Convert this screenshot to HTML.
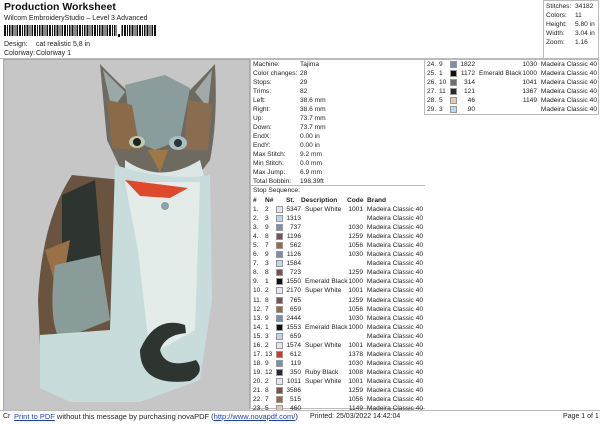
<!DOCTYPE html>
<html><head><style>
*{margin:0;padding:0;box-sizing:border-box}
body{width:600px;height:424px;background:#fff;font-family:"Liberation Sans",sans-serif;font-size:6.6px;color:#222;position:relative;overflow:hidden}
.a{position:absolute;white-space:nowrap}
.box{position:absolute;border:1px solid #bbb}
.r{position:absolute;height:9px;line-height:9px;white-space:nowrap}
.sw{position:absolute;width:7px;height:7px;top:1px;border:1px solid #999}
</style></head><body>
<div class="a" style="left:4px;top:1px;font-size:10.5px;font-weight:bold;color:#111">Production Worksheet</div>
<div class="a" style="left:4px;top:15px;font-size:7px">Wilcom EmbroideryStudio – Level 3 Advanced</div>
<div class="a" style="left:4px;top:25px;height:11px;width:153px;background:repeating-linear-gradient(90deg,#111 0 2px,#fff 2px 3px,#111 3px 4px,#fff 4px 5px,#111 5px 6.5px,#fff 6.5px 7.5px)"></div>
<div class="a" style="left:117px;top:25px;height:12px;width:4px;background:#fff"></div>
<div class="a" style="left:118px;top:34px;width:1.5px;height:3px;background:#111"></div>
<div class="a" style="left:4px;top:41px;font-size:7px">Design:</div><div class="a" style="left:36px;top:41px;font-size:7px">cat realistic 5,8 in</div>
<div class="a" style="left:4px;top:50px;font-size:7px">Colorway:</div><div class="a" style="left:36px;top:50px;font-size:7px">Colorway 1</div>
<div class="a" style="left:0;top:58px;width:598px;height:1px;background:#bbb"></div>
<div class="box" style="left:543px;top:0;width:56px;height:59px"></div>
<div class="a" style="left:546px;top:2px;line-height:9px">Stitches:<br>Colors:<br>Height:<br>Width:<br>Zoom:</div>
<div class="a" style="left:575px;top:2px;line-height:9px">34182<br>11<br>5.80 in<br>3.04 in<br>1.16</div>

<div class="a" style="left:3px;top:59px;width:247px;height:352px;background:#c6c6c6;border:1px solid #aaa">
<svg width="245" height="350" viewBox="4 60 245 350">
<path d="M100 64 Q115 80 132 95 L190 90 Q205 75 215 64 Q218 120 210 160 L195 180 L125 178 L107 140 Z" fill="#6e6a60"/>
<path d="M103 70 L125 92 L112 110Z" fill="#9aa8a8"/>
<path d="M212 70 L195 92 L208 108Z" fill="#a0a8a8"/>
<path d="M125 85 L165 75 L190 88 L180 140 L155 150 L132 140Z" fill="#8a9c9c"/>
<path d="M107 100 L132 105 L140 150 L112 148Z" fill="#8a6a48"/>
<path d="M188 100 L212 104 L208 150 L184 150Z" fill="#8a6c50"/>
<ellipse cx="137" cy="142" rx="8" ry="6" fill="#c0c8b0"/><circle cx="137" cy="142" r="4" fill="#1e2420"/>
<ellipse cx="178" cy="143" rx="9" ry="7" fill="#a8c0c4"/><circle cx="178" cy="143" r="4" fill="#2a3434"/>
<path d="M148 150 L168 150 L160 172Z" fill="#a07848"/>
<path d="M125 160 Q160 185 200 160 L205 180 L125 180Z" fill="#dce6e6"/>
<path d="M72 175 Q42 220 38 300 L40 345 L115 345 L122 180Z" fill="#6a5440"/>
<path d="M62 195 L95 180 L105 300 L62 300Z" fill="#2e3430"/>
<path d="M45 250 L70 240 L60 300Z" fill="#9a7048"/>
<path d="M55 265 Q48 320 60 340 L110 320 L100 255Z" fill="#8a9c9a"/>
<path d="M115 165 Q170 182 210 175 L212 300 L200 380 L140 402 L70 402 L40 388 L40 335 L110 330Z" fill="#c8dcdc"/>
<path d="M125 182 L200 182 L195 330 L150 355 L138 250Z" fill="#e4ecea"/>
<path d="M125 180 L188 188 L170 198 L140 196Z" fill="#e0482c"/>
<circle cx="165" cy="206" r="4" fill="#8aa0aa"/>
<path d="M185 325 Q155 315 140 350 Q140 387 190 381 Q206 372 196 360 Q165 370 160 350 Q165 335 186 333Z" fill="#2e3430"/>
</svg></div>

<div class="box" style="left:250px;top:59px;width:175px;height:350px;border-right:none"></div>
<div class="box" style="left:424px;top:59px;width:175px;height:56px"></div>
<div class="a" style="left:250px;top:185px;width:175px;height:1px;background:#bbb"></div>
<div class="a" style="left:253px;top:60px;line-height:9px">Machine:<br>Color changes:<br>Stops:<br>Trims:<br>Left:<br>Right:<br>Up:<br>Down:<br>EndX:<br>EndY:<br>Max Stitch:<br>Min Stitch:<br>Max Jump:<br>Total Bobbin:</div>
<div class="a" style="left:300px;top:60px;line-height:9px">Tajima<br>28<br>29<br>82<br>38.6 mm<br>38.6 mm<br>73.7 mm<br>73.7 mm<br>0.00 in<br>0.00 in<br>9.2 mm<br>0.0 mm<br>6.9 mm<br>198.39ft</div>
<div class="a" style="left:253px;top:187px">Stop Sequence:</div>
<div class="r" style="left:253px;top:196px;font-weight:bold;text-decoration:underline"><span class="a" style="left:0">#</span><span class="a" style="left:12px">N#</span><span class="a" style="left:33px">St.</span><span class="a" style="left:48px">Description</span><span class="a" style="left:94px">Code</span><span class="a" style="left:114px">Brand</span></div>
<div id="rows"></div>
<div class="a" style="left:0;top:410px;width:600px;height:14px;background:#fff;border-top:1px solid #bbb"></div>
<div class="a" style="left:3px;top:413px;font-size:7px">Cr</div>
<div class="a" style="left:14px;top:412px;font-size:7.5px"><span style="color:#1a3fd0;text-decoration:underline">Print to PDF</span> without this message by purchasing novaPDF (<span style="color:#1a3fd0;text-decoration:underline">http://www.novapdf.com/</span>)</div>
<div class="a" style="left:310px;top:413px;font-size:7px">Printed: 25/03/2022 14:42:04</div>
<div class="a" style="left:563px;top:413px;font-size:7px">Page 1 of 1</div>
<script>
var W='#e4e4f2',LB='#b8d8f0',BG='#7890b0',MB='#7a5050',BR='#a06840',K='#111',R='#e03020',T='#e4c8b0',DG='#6a7078',KK='#2a2a2e';
var d=[[2,W,5347,'Super White',1001],[3,LB,1313,'',''],[9,BG,737,'',1030],[8,MB,1196,'',1259],[7,BR,562,'',1056],[9,BG,1126,'',1030],[3,LB,1584,'',''],[8,MB,723,'',1259],[1,K,1550,'Emerald Black',1000],[2,W,2170,'Super White',1001],[8,MB,765,'',1259],[7,BR,659,'',1056],[9,BG,2444,'',1030],[1,K,1553,'Emerald Black',1000],[3,LB,659,'',''],[2,W,1574,'Super White',1001],[13,R,612,'',1378],[9,BG,119,'',1030],[12,KK,350,'Ruby Black',1008],[2,W,1011,'Super White',1001],[8,MB,3586,'',1259],[7,BR,515,'',1056],[5,T,460,'',1149],[9,BG,1822,'',1030],[1,K,1172,'Emerald Black',1000],[10,DG,314,'',1041],[11,KK,121,'',1367],[5,T,46,'',1149],[3,LB,90,'','']];
var h='';d.forEach(function(r,i){var x,y;if(i<23){x=253;y=205+i*9.05}else{x=427;y=60+(i-23)*9.05}
h+='<div class="r" style="left:'+x+'px;top:'+y+'px;width:170px"><span class="a" style="left:0">'+(i+1)+'.</span><span class="a" style="left:12px">'+r[0]+'</span><span class="sw" style="left:23px;background:'+r[1]+'"></span><span class="a" style="right:122px">'+r[2]+'</span><span class="a" style="left:52px">'+r[3]+'</span><span class="a" style="right:60px">'+r[4]+'</span><span class="a" style="right:0">Madeira Classic 40</span></div>';});
document.getElementById('rows').innerHTML=h;
</script>
</body></html>
